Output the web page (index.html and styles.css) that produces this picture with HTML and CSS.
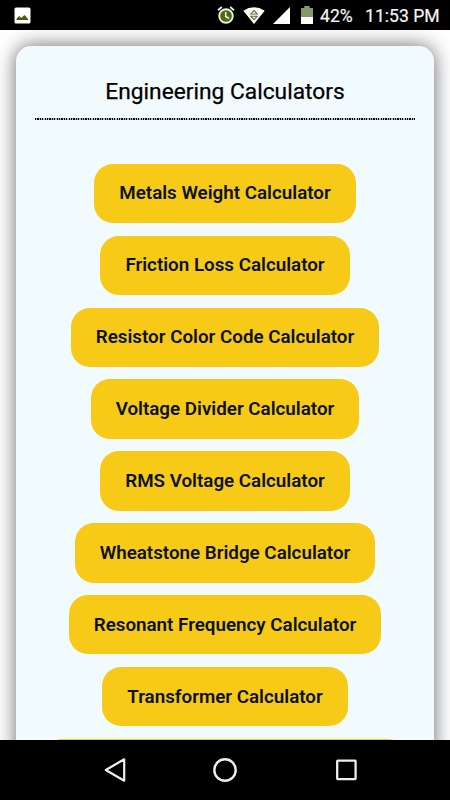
FILE: index.html
```html
<!DOCTYPE html>
<html lang="en">
<head>
    <meta charset="UTF-8">
    <meta name="viewport" content="width=device-width, initial-scale=1.0">
    <title>Engineering Calculators</title>
    <link rel="stylesheet" href="styles.css">
</head>
<body>
    <div class="status-bar">
        <svg class="icon-picture" width="17" height="17" viewBox="0 0 17 17">
            <rect x="0.5" y="0.5" width="16" height="16" rx="1.5" fill="#fff"/>
            <path d="M2.5 13 V11.8 L5.3 9 L7.3 11 L10.5 8 L14 12 V13 Z" fill="#435d0b"/>
        </svg>
        <div class="status-right">
            <svg width="18" height="18" viewBox="0 0 18 18">
                <circle cx="9" cy="10" r="6.8" fill="#4b6b15" stroke="#efefdf" stroke-width="1.9"/>
                <path d="M1 4.2 L4.8 1 M17 4.2 L13.2 1" stroke="#efefdf" stroke-width="1.8"/>
                <path d="M8.7 6 V10.5 L12 12.5" fill="none" stroke="#fff" stroke-width="1.5"/>
            </svg>
            <svg class="icon-wifi" width="22" height="17" viewBox="0 0 22 17">
                <path d="M0.3 3.7 Q11 -3 21.7 3.7 L11 17 Z" fill="#fff"/>
                <path d="M7.8 7 L11 3.3 L14.2 7 Z M7.8 9.2 L11 12.7 L14.2 9.2 Z" fill="#fff" stroke="#5a7229" stroke-width="1.1"/>
            </svg>
            <svg class="icon-signal" width="17" height="17" viewBox="0 0 17 17">
                <path d="M17 0 V17 H0 Z" fill="#fff"/>
            </svg>
            <svg class="icon-battery" width="12" height="18" viewBox="0 0 12 18">
                <path d="M0 2 H3.3 V0 H8.7 V2 H12 V11 H0 Z" fill="#87976a"/>
                <path d="M0 11 H12 V18 H0 Z" fill="#fff"/>
            </svg>
            <span class="percent">42%</span>
            <span class="clock">11:53 PM</span>
        </div>
    </div>

    <div class="page">
        <div class="container">
            <h1>Engineering Calculators</h1>
            <div class="divider"></div>
            <div class="btn-list">
                <button class="btn">Metals Weight Calculator</button>
                <button class="btn">Friction Loss Calculator</button>
                <button class="btn">Resistor Color Code Calculator</button>
                <button class="btn">Voltage Divider Calculator</button>
                <button class="btn">RMS Voltage Calculator</button>
                <button class="btn">Wheatstone Bridge Calculator</button>
                <button class="btn">Resonant Frequency Calculator</button>
                <button class="btn">Transformer Calculator</button>
                <button class="btn btn-wide"></button>
            </div>
        </div>
    </div>

    <div class="nav-bar">
        <svg width="24" height="26" viewBox="0 0 24 26">
            <path d="M21.2 2.3 V23.7 L2.8 13 Z" fill="none" stroke="#eee" stroke-width="2.2" stroke-linejoin="round"/>
        </svg>
        <svg class="nav-home" width="24" height="26" viewBox="0 0 24 26">
            <circle cx="12" cy="13" r="10.7" fill="none" stroke="#eee" stroke-width="2.4"/>
        </svg>
        <svg class="nav-recent" width="24" height="26" viewBox="0 0 24 26">
            <rect x="3.2" y="3.7" width="18.4" height="18.4" rx="0.5" fill="none" stroke="#eee" stroke-width="2.3"/>
        </svg>
    </div>
</body>
</html>
```
FILE: styles.css
```css
* {
    box-sizing: border-box;
}

body {
    font-family: Roboto, sans-serif;
    margin: 0;
    height: 800px;
    display: flex;
    flex-direction: column;
    overflow: hidden;
    background-color: #fff;
}

.status-bar {
    flex: none;
    height: 30px;
    padding: 0 11px 0 14px;
    display: flex;
    justify-content: space-between;
    align-items: center;
    background-color: #000;
    color: #f4f4f4;
}

.status-right {
    display: flex;
    align-items: center;
}

.icon-wifi {
    margin-left: 8px;
}

.icon-signal {
    margin-left: 8px;
}

.icon-battery {
    margin-left: 11px;
}

.percent, .clock {
    font-size: 17.6px;
    line-height: 30px;
    padding-top: 2px;
    white-space: nowrap;
    -webkit-text-stroke: 0.2px #f4f4f4;
}

.percent {
    width: 33px;
    margin-left: 7px;
}

.clock {
    width: 74px;
    margin-left: 12px;
}

.page {
    flex: 1;
    min-height: 0;
    padding: 16px 16px 0;
    overflow: hidden;
}

.container {
    height: 900px;
    padding: 27px 19px;
    background-color: #f1fafc;
    border-radius: 15px;
    box-shadow: 0 0 20px rgba(0, 0, 0, 0.6);
}

h1 {
    margin: 0;
    height: 45px;
    font-size: 22.75px;
    font-weight: 400;
    line-height: 37px;
    text-align: center;
    color: #000;
    -webkit-text-stroke: 0.25px #000;
}

.divider {
    height: 2px;
    margin-bottom: 43.8px;
    background: repeating-linear-gradient(90deg, #000 0, #000 1.2px, #b5bcbe 1.2px, #b5bcbe 2.4px);
}

.btn-list {
    display: flex;
    flex-direction: column;
    align-items: center;
    gap: 12.6px;
}

.btn {
    height: 59.3px;
    padding: 0 25px;
    border: none;
    border-radius: 19px;
    background-color: #f7ca18;
    color: #0c1220;
    font-family: inherit;
    font-size: 18.8px;
    font-weight: 600;
    white-space: nowrap;
    cursor: pointer;
}

.btn-wide {
    width: 364px;
}

.nav-bar {
    flex: none;
    height: 60px;
    padding: 0 92px 0 103px;
    display: flex;
    align-items: center;
    background-color: #000;
}

.nav-home {
    margin-left: 86px;
}

.nav-recent {
    margin-left: 97px;
}
```
